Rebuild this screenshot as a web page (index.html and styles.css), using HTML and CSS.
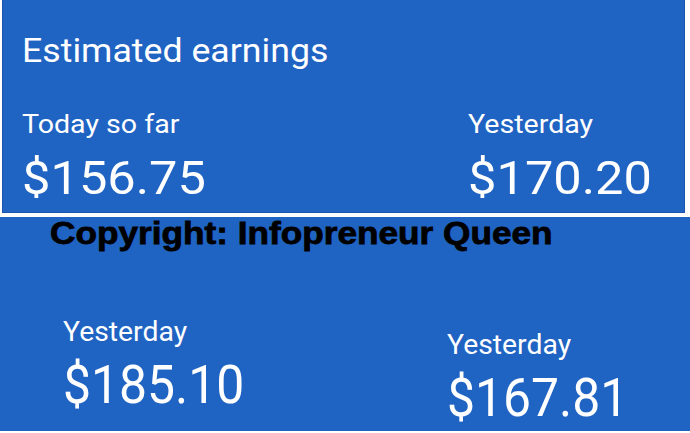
FILE: index.html
```html
<!DOCTYPE html>
<html>
<head>
<meta charset="utf-8">
<link rel="stylesheet" href="styles.css">
</head>
<body>
<section class="panel top">
  <div class="title">Estimated earnings</div>
  <div class="stats">
    <div class="stat">
      <div class="label">Today so far</div>
      <div class="amount">$156.75</div>
    </div>
    <div class="stat">
      <div class="label">Yesterday</div>
      <div class="amount">$170.20</div>
    </div>
  </div>
</section>
<section class="panel bottom">
  <div class="copyright">Copyright: Infopreneur Queen</div>
  <div class="stats2">
    <div class="stat s-left">
      <div class="label2">Yesterday</div>
      <div class="amount2">$185.10</div>
    </div>
    <div class="stat s-right">
      <div class="label2">Yesterday</div>
      <div class="amount2">$167.81</div>
    </div>
  </div>
</section>
</body>
</html>
```
FILE: styles.css
```css
html, body {
  margin: 0;
  padding: 0;
  background: #ffffff;
  width: 690px;
  height: 433px;
  overflow: hidden;
}
.panel {
  background: #1f63c3;
  color: #ffffff;
  font-family: Roboto, "Noto Sans", sans-serif;
  box-sizing: border-box;
}
.top {
  margin: 0 5px 0 2px;
  height: 213px;
  border: 1px solid #1a56ad;
  border-top: 0;
  padding: 33px 0 0 19px;
}
.title {
  font-size: 34px;
  line-height: 1;
  transform: scaleX(1.05);
  transform-origin: left;
}
.stats {
  display: grid;
  grid-template-columns: 446px auto;
  margin-top: 44px;
}
.label {
  font-size: 26px;
  line-height: 1;
  transform: scaleX(1.1);
  transform-origin: left;
}
.amount {
  font-size: 46px;
  line-height: 1;
  margin-top: 18px;
  transform: scaleX(1.1);
  transform-origin: left;
}
.bottom {
  margin-top: 6px;
  height: 214px;
  padding: 0 0 0 50px;
}
.copyright {
  font-family: "Liberation Sans", Arial, sans-serif;
  font-weight: bold;
  font-size: 32px;
  line-height: 1;
  margin-top: -2px;
  color: #000000;
  -webkit-text-stroke: 0.8px #000;
  transform: scaleX(1.1);
  transform-origin: left;
}
.stats2 {
  display: grid;
  grid-template-columns: 384px auto;
  padding: 0 0 0 13px;
}
.s-left {
  margin-top: 70px;
}
.s-right {
  margin-top: 83px;
}
.label2 {
  font-size: 27px;
  line-height: 1;
  transform: scaleX(1.05);
  transform-origin: left;
}
.amount2 {
  font-size: 53px;
  line-height: 1;
  margin-top: 13px;
  transform: scaleX(0.94);
  transform-origin: left;
}
```
